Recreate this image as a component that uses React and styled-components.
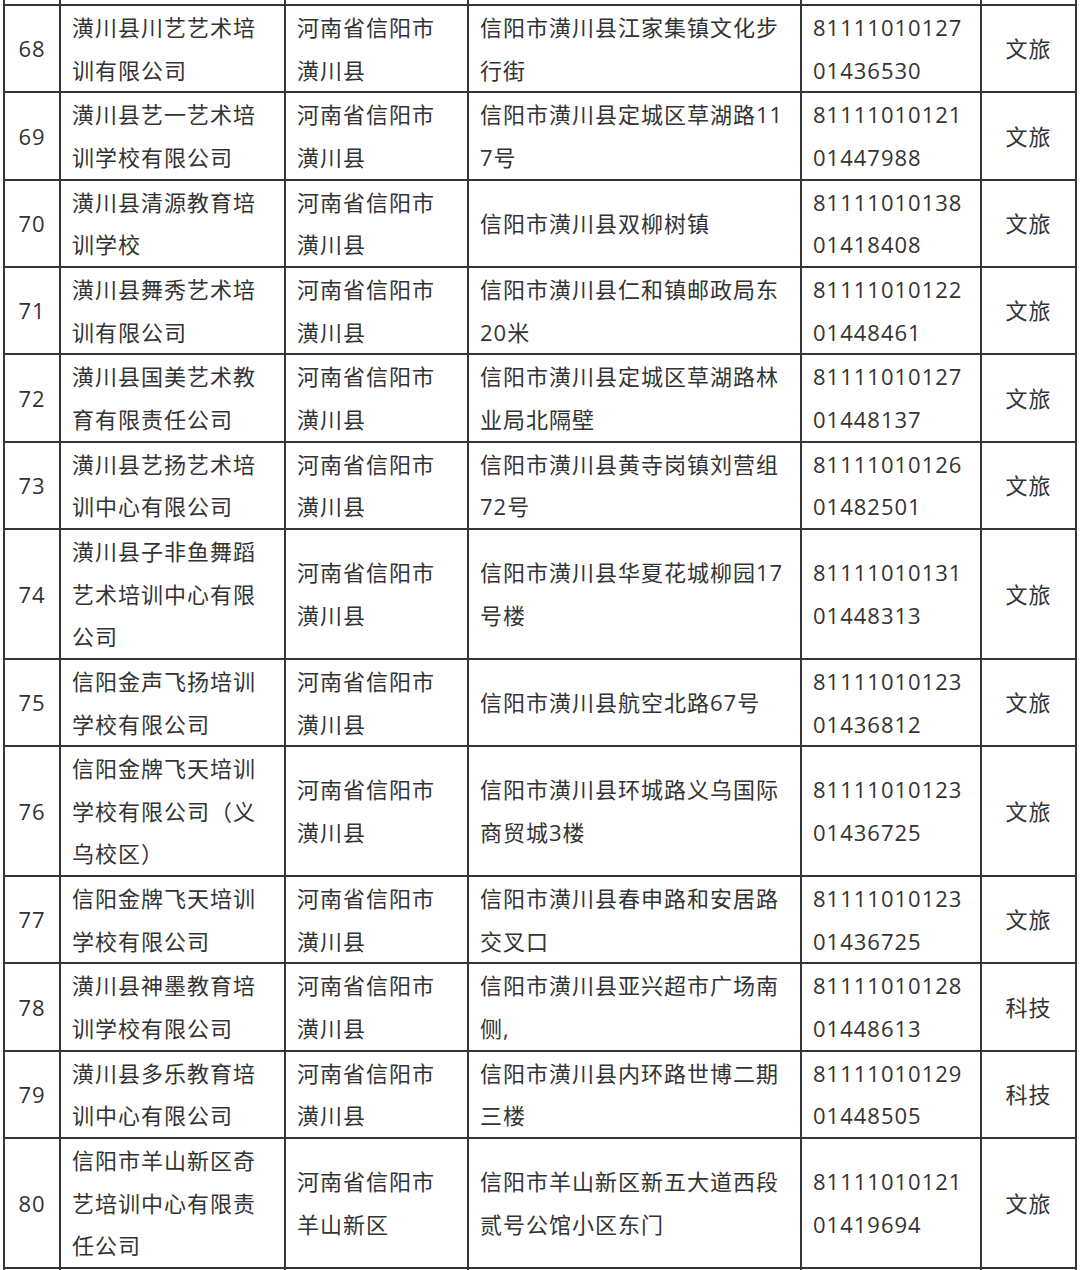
import styled, { createGlobalStyle } from 'styled-components'

const rows = [
  ['68', ['潢川县川艺艺术培', '训有限公司'], ['河南省信阳市', '潢川县'], ['信阳市潢川县江家集镇文化步', '行街'], ['81111010127', '01436530'], '文旅'],
  ['69', ['潢川县艺一艺术培', '训学校有限公司'], ['河南省信阳市', '潢川县'], ['信阳市潢川县定城区草湖路11', '7号'], ['81111010121', '01447988'], '文旅'],
  ['70', ['潢川县清源教育培', '训学校'], ['河南省信阳市', '潢川县'], ['信阳市潢川县双柳树镇'], ['81111010138', '01418408'], '文旅'],
  ['71', ['潢川县舞秀艺术培', '训有限公司'], ['河南省信阳市', '潢川县'], ['信阳市潢川县仁和镇邮政局东', '20米'], ['81111010122', '01448461'], '文旅'],
  ['72', ['潢川县国美艺术教', '育有限责任公司'], ['河南省信阳市', '潢川县'], ['信阳市潢川县定城区草湖路林', '业局北隔壁'], ['81111010127', '01448137'], '文旅'],
  ['73', ['潢川县艺扬艺术培', '训中心有限公司'], ['河南省信阳市', '潢川县'], ['信阳市潢川县黄寺岗镇刘营组', '72号'], ['81111010126', '01482501'], '文旅'],
  ['74', ['潢川县子非鱼舞蹈', '艺术培训中心有限', '公司'], ['河南省信阳市', '潢川县'], ['信阳市潢川县华夏花城柳园17', '号楼'], ['81111010131', '01448313'], '文旅'],
  ['75', ['信阳金声飞扬培训', '学校有限公司'], ['河南省信阳市', '潢川县'], ['信阳市潢川县航空北路67号'], ['81111010123', '01436812'], '文旅'],
  ['76', ['信阳金牌飞天培训', '学校有限公司（义', '乌校区）'], ['河南省信阳市', '潢川县'], ['信阳市潢川县环城路义乌国际', '商贸城3楼'], ['81111010123', '01436725'], '文旅'],
  ['77', ['信阳金牌飞天培训', '学校有限公司'], ['河南省信阳市', '潢川县'], ['信阳市潢川县春申路和安居路', '交叉口'], ['81111010123', '01436725'], '文旅'],
  ['78', ['潢川县神墨教育培', '训学校有限公司'], ['河南省信阳市', '潢川县'], ['信阳市潢川县亚兴超市广场南', '侧,'], ['81111010128', '01448613'], '科技'],
  ['79', ['潢川县多乐教育培', '训中心有限公司'], ['河南省信阳市', '潢川县'], ['信阳市潢川县内环路世博二期', '三楼'], ['81111010129', '01448505'], '科技'],
  ['80', ['信阳市羊山新区奇', '艺培训中心有限责', '任公司'], ['河南省信阳市', '羊山新区'], ['信阳市羊山新区新五大道西段', '贰号公馆小区东门'], ['81111010121', '01419694'], '文旅'],
]

const widths = [56, 225, 183, 333, 180, 95]

const Global = createGlobalStyle`
  html, body {
    margin: 0;
    padding: 0;
    background: #fff;
  }
  body {
    height: 1270px;
    overflow: hidden;
  }
`

const Page = styled.div`
  padding: 0 4px 0 3px;
  font-family: "Open Sans", "Noto Sans CJK SC", sans-serif;
  color: #333;
`

const Table = styled.table`
  width: 1073px;
  border-collapse: collapse;
  table-layout: fixed;
`

const Cell = styled.td`
  border: 2px solid #353535;
  padding: 0 8px 0 11px;
  font-size: 22px;
  letter-spacing: 1px;
  line-height: 42.65px;
  vertical-align: middle;
  text-align: ${p => (p.$center ? 'center' : 'left')};
  white-space: nowrap;
  ${p => p.$center && 'padding: 0;'}
`

const Spacer = styled.td`
  border-left: 2px solid #353535;
  border-right: 2px solid #353535;
  border-top: none;
  height: ${p => p.$h}px;
  padding: 0;
`

const Lines = ({ items }) => (
  <>
    {items.map((t, i) => (
      <span key={i}>
        {i > 0 && <br />}
        {t}
      </span>
    ))}
  </>
)

const App = () => {
  return (
    <>
      <Global />
      <Page>
        <Table>
          <colgroup>
            {widths.map((w, i) => (
              <col key={i} style={{ width: w }} />
            ))}
          </colgroup>
          <tbody>
            <tr>
              {widths.map((_, i) => (
                <Spacer key={i} $h={4} />
              ))}
            </tr>
            {rows.map(([no, name, area, addr, code, kind]) => (
              <tr key={no}>
                <Cell $center>{no}</Cell>
                <Cell><Lines items={name} /></Cell>
                <Cell><Lines items={area} /></Cell>
                <Cell><Lines items={addr} /></Cell>
                <Cell><Lines items={code} /></Cell>
                <Cell $center>{kind}</Cell>
              </tr>
            ))}
            <tr>
              {widths.map((_, i) => (
                <Spacer key={i} $h={30} />
              ))}
            </tr>
          </tbody>
        </Table>
      </Page>
    </>
  )
}

export default App
